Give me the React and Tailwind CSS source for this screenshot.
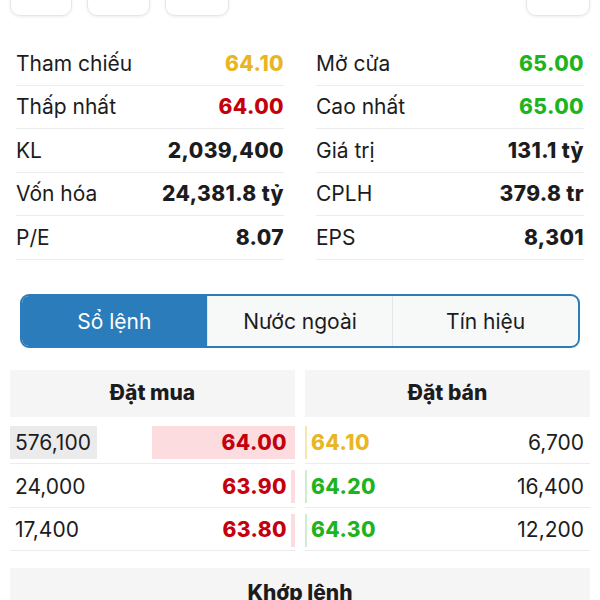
import { useState } from "react";

const stats = [
  [
    { label: "Tham chiếu", value: "64.10", color: "text-[#e9b623]" },
    { label: "Mở cửa", value: "65.00", color: "text-[#1eb41e]" },
  ],
  [
    { label: "Thấp nhất", value: "64.00", color: "text-[#c4000c]" },
    { label: "Cao nhất", value: "65.00", color: "text-[#1eb41e]" },
  ],
  [
    { label: "KL", value: "2,039,400", color: "text-[#1c1c1e]" },
    { label: "Giá trị", value: "131.1 tỷ", color: "text-[#1c1c1e]" },
  ],
  [
    { label: "Vốn hóa", value: "24,381.8 tỷ", color: "text-[#1c1c1e]" },
    { label: "CPLH", value: "379.8 tr", color: "text-[#1c1c1e]" },
  ],
  [
    { label: "P/E", value: "8.07", color: "text-[#1c1c1e]" },
    { label: "EPS", value: "8,301", color: "text-[#1c1c1e]" },
  ],
];

const bids = [
  { vol: "576,100", price: "64.00", bar: "w-[143px]", hi: true, h: "h-[44px] mt-[3px]" },
  { vol: "24,000", price: "63.90", bar: "w-[4px]", h: "h-[44px]" },
  { vol: "17,400", price: "63.80", bar: "w-[4px]", h: "h-[43px]" },
];

const asks = [
  { price: "64.10", vol: "6,700", color: "text-[#e9b623]", line: "bg-[#f6e6b0]", h: "h-[44px] mt-[3px]" },
  { price: "64.20", vol: "16,400", color: "text-[#1eb41e]", line: "bg-[#cfeccf]", h: "h-[44px]" },
  { price: "64.30", vol: "12,200", color: "text-[#1eb41e]", line: "bg-[#cfeccf]", h: "h-[43px]" },
];

const tabs = ["Sổ lệnh", "Nước ngoài", "Tín hiệu"];

const StatCell = ({ item }) => (
  <div className="flex justify-between items-center h-[43.5px] border-b border-[#ececec]">
    <span className="text-[21px] text-[#1c1c1e]">{item.label}</span>
    <span className={`text-[21px] font-extrabold tracking-[0.4px] ${item.color}`}>{item.value}</span>
  </div>
);

const App = () => {
  const [tab, setTab] = useState(0);

  return (
    <div className="w-[600px] h-[600px] overflow-hidden bg-white font-['Inter',sans-serif]">
      {/* top buttons, cut off */}
      <div className="flex justify-between px-[10px] -mt-[24px]">
        <div className="flex gap-[15px]">
          <div className="w-[62px] h-[40px] rounded-[10px] border border-[#e6e6e6] shadow-[0_1px_3px_rgba(0,0,0,0.08)]" />
          <div className="w-[63px] h-[40px] rounded-[10px] border border-[#e6e6e6] shadow-[0_1px_3px_rgba(0,0,0,0.08)]" />
          <div className="w-[64px] h-[40px] rounded-[10px] border border-[#e6e6e6] shadow-[0_1px_3px_rgba(0,0,0,0.08)]" />
        </div>
        <div className="w-[64px] h-[40px] rounded-[10px] border border-[#e6e6e6] shadow-[0_1px_3px_rgba(0,0,0,0.08)]" />
      </div>

      <div className="grid grid-cols-2 gap-x-[32px] px-[16px] mt-[26px]">
        <div className="flex flex-col">
          {stats.map((row, i) => (
            <StatCell key={i} item={row[0]} />
          ))}
        </div>
        <div className="flex flex-col">
          {stats.map((row, i) => (
            <StatCell key={i} item={row[1]} />
          ))}
        </div>
      </div>

      <div className="mx-[20px] mt-[34px] flex h-[54px] rounded-[9px] border-2 border-[#2b7cba] bg-[#f7f8f8] overflow-hidden">
        {tabs.map((t, i) => (
          <button
            key={t}
            onClick={() => setTab(i)}
            className={`flex-1 flex items-center justify-center pt-[3px] text-[21px] ${
              i === 1 ? "border-x border-[#e4e6e8]" : ""
            } ${tab === i ? "bg-[#2b7cba] text-white" : "text-[#1c1c1e]"}`}
          >
            {t}
          </button>
        ))}
      </div>

      <div className="grid grid-cols-2 gap-x-[10px] px-[10px] mt-[22px]">
        <div className="flex flex-col">
          <div className="h-[47px] bg-[#f5f5f5] flex items-center justify-center text-[21px] font-extrabold text-[#1c1c1e]">
            Đặt mua
          </div>
          {bids.map((b, i) => (
            <div key={i} className={`${b.h} pt-[3px] flex items-center justify-between border-b border-[#ececec]`}>
              <span
                className={`text-[21px] text-[#1c1c1e] h-[33px] flex items-center pl-[5px] pr-[6px] ${
                  b.hi ? "bg-[#ebebeb]" : ""
                }`}
              >
                {b.vol}
              </span>
              <div className="flex items-center h-[33px]">
                {b.hi ? (
                  <div className={`${b.bar} h-full bg-[#fcdcdf] flex items-center justify-end pr-[8px]`}>
                    <span className="text-[21px] font-extrabold tracking-[0.4px] text-[#c4000c]">{b.price}</span>
                  </div>
                ) : (
                  <>
                    <span className="text-[21px] font-extrabold tracking-[0.4px] text-[#c4000c] pr-[4px]">{b.price}</span>
                    <div className={`${b.bar} h-full bg-[#fcdcdf]`} />
                  </>
                )}
              </div>
            </div>
          ))}
        </div>

        <div className="flex flex-col">
          <div className="h-[47px] bg-[#f5f5f5] flex items-center justify-center text-[21px] font-extrabold text-[#1c1c1e]">
            Đặt bán
          </div>
          {asks.map((a, i) => (
            <div key={i} className={`${a.h} pt-[3px] flex items-center justify-between border-b border-[#ececec]`}>
              <div className="flex items-center h-[33px]">
                <div className={`w-[2px] h-full ${a.line}`} />
                <span className={`text-[21px] font-extrabold tracking-[0.4px] pl-[4px] ${a.color}`}>{a.price}</span>
              </div>
              <span className="text-[21px] text-[#1c1c1e] pr-[6px]">{a.vol}</span>
            </div>
          ))}
        </div>
      </div>

      <div className="mx-[10px] mt-[17px] h-[50px] bg-[#f5f5f5] flex items-center justify-center text-[21px] font-extrabold text-[#1c1c1e]">
        Khớp lệnh
      </div>
    </div>
  );
};

export default App;
